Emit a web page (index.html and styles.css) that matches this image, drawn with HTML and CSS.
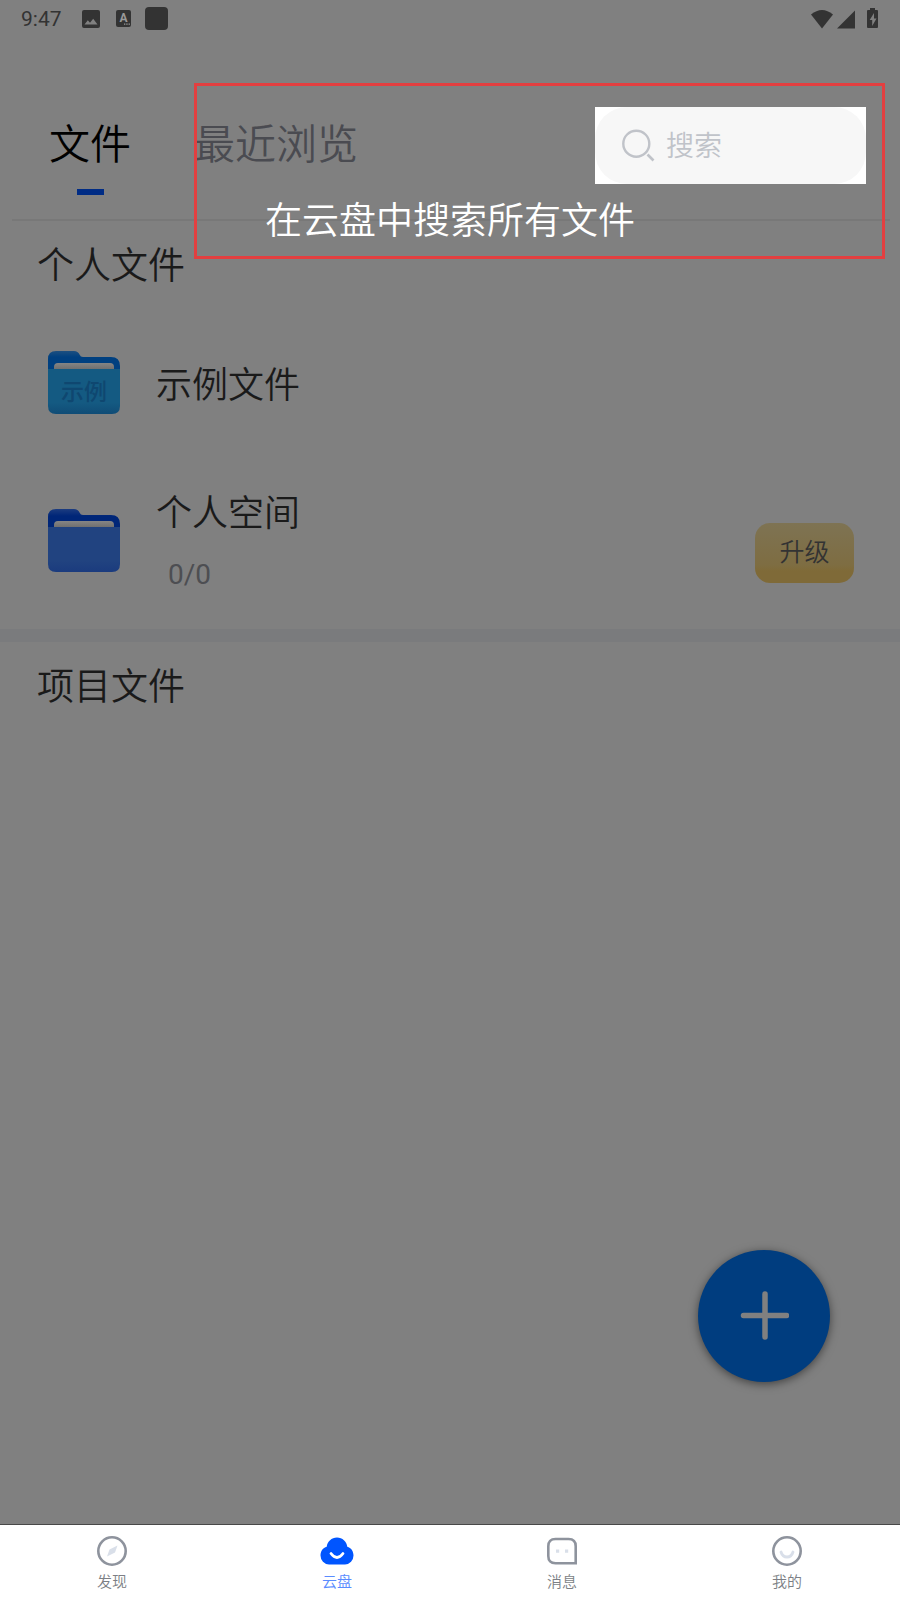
FILE: index.html
```html
<!DOCTYPE html>
<html lang="zh-CN">
<head>
<meta charset="utf-8">
<meta name="viewport" content="width=device-width, initial-scale=1">
<title>云盘</title>
<link rel="stylesheet" href="styles.css">
</head>
<body>
<div class="app">
  <div class="status">
    <span class="status-time">9:47</span>
    <svg class="status-image" width="18" height="18" viewBox="0 0 18 18" aria-hidden="true"><path fill="#333" fill-rule="evenodd" d="M2 0h14a2 2 0 0 1 2 2v14a2 2 0 0 1-2 2H2a2 2 0 0 1-2-2V2a2 2 0 0 1 2-2zM2.500 14.500h13L11.200 8.700 8 12.800 5.800 10.200z"/></svg>
    <svg class="status-letter" width="15" height="17" viewBox="0 0 15 17" aria-hidden="true"><rect width="15" height="17" rx="2" fill="#333"/><text class="status-glyph" x="7.500" y="12" text-anchor="middle">A</text><path fill="#999" d="M8 13.500h1.300v1.300H8zM10.300 13.500h1.300v1.300h-1.300zM12.600 13.500h1.300v1.300h-1.300z"/></svg>
    <span class="status-square"></span>
    <svg class="status-signals" width="68" height="22" viewBox="0 0 68 22" aria-hidden="true">
      <path fill="#333" d="M0 6.500Q11-2.500 22 6.500L11 20.500z"/>
      <path fill="#333" d="M44 2.500V20.500H26z"/>
      <path fill="#333" fill-rule="evenodd" d="M59 0h5v2h2q1 0 1 1v16q0 1-1 1h-9q-1 0-1-1V3q0-1 1-1h2zM63 5l-4.300 7h2.500v6l4.300-7.500h-2.500z"/>
    </svg>
  </div>
  <header class="header">
    <nav class="tabs">
      <button class="tab tab-active" type="button">文件</button>
      <button class="tab" type="button">最近浏览</button>
    </nav>
    <div class="spotlight">
      <label class="search">
        <svg width="34" height="34" viewBox="0 0 34 34" aria-label="搜索"><circle cx="15.300" cy="14.700" r="13" fill="none" stroke="#c0c3c9" stroke-width="2.400"/><path d="M26.500 25.500l6 6" stroke="#c0c3c9" stroke-width="2.600"/></svg>
        <input class="search-input" type="search" placeholder="搜索">
      </label>
    </div>
  </header>
  <div class="frame"></div>
  <p class="tip">在云盘中搜索所有文件</p>
  <main class="main">
    <section class="section">
      <h2 class="section-title">个人文件</h2>
      <div class="rows">
        <div class="row">
          <svg class="folder" width="72" height="63" viewBox="0 0 72 63" aria-hidden="true">
            <defs>
              <linearGradient id="tabA" x2="0" y2="1"><stop stop-color="#1d4f80"/><stop offset=".3" stop-color="#004080"/></linearGradient>
              <linearGradient id="bodyA" x2="0" y2="1"><stop offset=".75" stop-color="#145a82"/><stop offset="1" stop-color="#104c76"/></linearGradient>
              <linearGradient id="sheet" x2="0" y2="1"><stop stop-color="#858585"/><stop offset="1" stop-color="#707070"/></linearGradient>
            </defs>
            <path fill="url(#tabA)" d="M0 20V8q0-8 8-8h18q4 0 5.500 3.500Q32.500 6 35 6h28q9 0 9 9v5z"/>
            <path fill="url(#sheet)" d="M6 18v-2q0-4 4-4h52q4 0 4 4v2z"/>
            <path fill="url(#bodyA)" d="M0 18h72v37q0 8-8 8H8q-8 0-8-8z"/>
            <text class="folder-text" x="36" y="49" text-anchor="middle">示例</text>
          </svg>
          <div class="row-text"><span class="row-title">示例文件</span></div>
        </div>
        <div class="row">
          <svg class="folder" width="72" height="63" viewBox="0 0 72 63" aria-hidden="true">
            <defs>
              <linearGradient id="tabB" x2="0" y2="1"><stop stop-color="#1c3c80"/><stop offset=".35" stop-color="#002678"/></linearGradient>
              <linearGradient id="bodyB" x2="0" y2="1"><stop offset=".75" stop-color="#214380"/><stop offset="1" stop-color="#1b3b7e"/></linearGradient>
            </defs>
            <path fill="url(#tabB)" d="M0 20V8q0-8 8-8h18q4 0 5.500 3.500Q32.500 6 35 6h28q9 0 9 9v5z"/>
            <path fill="url(#sheet)" d="M6 18v-2q0-4 4-4h52q4 0 4 4v2z"/>
            <path fill="url(#bodyB)" d="M0 18h72v37q0 8-8 8H8q-8 0-8-8z"/>
          </svg>
          <div class="row-text"><span class="row-title">个人空间</span><span class="row-meta">0/0</span></div>
          <button class="upgrade" type="button">升级</button>
        </div>
      </div>
    </section>
    <section class="section section-project">
      <h2 class="section-title">项目文件</h2>
    </section>
  </main>
  <button class="fab" type="button" aria-label="新建"><svg width="50" height="50" viewBox="0 0 50 50"><path d="M26 3v43M4.500 24.500h43" stroke="#808080" stroke-width="5.500" stroke-linecap="round"/></svg></button>
  <nav class="bottom">
    <a class="item" href="#">
      <svg width="34" height="34" viewBox="0 0 34 34"><circle cx="17" cy="17" r="13.700" fill="none" stroke="#8e939d" stroke-width="2.600"/><path fill="#d9dfe9" d="M22.500 11.500l-2.500 7L12 22.500l2.500-7z"/></svg>
      <span>发现</span>
    </a>
    <a class="item item-active" href="#">
      <svg width="34" height="34" viewBox="0 0 34 34"><path fill="#0055ff" d="M9 30.500A9 9 0 0 1 .500 21.500C.500 17 3 13.800 6.700 12.700 7.500 7.500 11.500 3.500 17 3.500s9.500 4 10.300 9.200c3.700 1.100 6.200 4.300 6.200 8.800a9 9 0 0 1-8.500 9z"/><path d="M11 19.500q6 8 12 0" fill="none" stroke="#fff" stroke-width="2.800" stroke-linecap="round"/></svg>
      <span>云盘</span>
    </a>
    <a class="item" href="#">
      <svg width="34" height="34" viewBox="0 0 34 34"><path d="M10.500 5h13q7.200 0 7.200 7.200v17H10.500q-7.200 0-7.200-7.200v-9.800Q3.300 5 10.500 5z" fill="none" stroke="#8e939d" stroke-width="2.600"/><path fill="#d9dfe9" d="M11 15.500h3.200v3.200H11zM20 15.500h3.200v3.200H20z"/></svg>
      <span>消息</span>
    </a>
    <a class="item" href="#">
      <svg width="34" height="34" viewBox="0 0 34 34"><circle cx="17" cy="17" r="13.700" fill="none" stroke="#8e939d" stroke-width="2.600"/><path d="M11 18q1.500 5 6 5t6-5" fill="none" stroke="#d9dfe9" stroke-width="2.800" stroke-linecap="round"/></svg>
      <span>我的</span>
    </a>
  </nav>
</div>
</body>
</html>
```
FILE: styles.css
```css
* { box-sizing: border-box; }
body { margin: 0; background: #808080; font-family: "Noto Sans CJK SC", sans-serif; font-weight: 350; color: #1a1a1a; }
button, input { font: inherit; border: 0; padding: 0; background: none; }
svg { display: block; flex: none; }
.app { position: relative; display: flex; flex-direction: column; min-height: 100vh; }

.status { display: flex; align-items: center; height: 37px; padding: 0 21px; }
.status-time { font: 400 21px/36px Roboto, sans-serif; color: #333; }
.status-image { margin-left: 20px; }
.status-letter { margin-left: 16px; }
.status-glyph { fill: #999; font: 700 12px Roboto, sans-serif; }
.status-square { width: 23px; height: 23px; margin-left: 14px; border-radius: 4px; background: #333; }
.status-signals { margin-left: auto; }

.header { display: flex; justify-content: space-between; align-items: flex-start; padding: 70px 34px 24px 49px; }
.header::after { content: ""; position: absolute; top: 219px; left: 12px; right: 10px; height: 2px; background: #787878; }
.tabs { display: flex; gap: 63px; padding-top: 6px; }
.tab { display: flex; flex-direction: column; align-items: center; gap: 20px; height: 82px; font-size: 41px; line-height: 56px; color: #4a4b51; white-space: nowrap; }
.tab-active { color: #000; }
.tab-active::after { content: ""; width: 27px; height: 6px; background: #002c85; }
.spotlight { background: #fff; }
.search { display: flex; align-items: center; gap: 11px; width: 271px; height: 77px; padding: 0 26px; border-radius: 32px; background: #f7f7f7; }
.search-input { flex: 1; min-width: 0; padding-bottom: 4px; outline: 0; font-size: 28px; line-height: 40px; color: #333; appearance: none; }
.search-input::placeholder { color: #c0c3c9; opacity: 1; }
.frame { position: absolute; top: 83px; left: 194px; right: 15px; height: 176px; border: 3px solid #e33f40; pointer-events: none; }
.tip { position: absolute; top: 190px; left: 0; right: 0; margin: 0; text-align: center; color: #fff; font-size: 37px; line-height: 56px; pointer-events: none; }

.main { flex: 1; }
.section { padding: 16px 0 33px; }
.section-title { margin: 0; padding: 0 37px; font-size: 37px; line-height: 56px; font-weight: 350; }
.section-project { padding-top: 14px; border-top: 13px solid #7a7b7d; }
.rows { display: flex; flex-direction: column; gap: 70px; padding: 60px 46px 0 48px; }
.row { display: flex; align-items: center; gap: 36px; }
.row-text { display: flex; flex: 1; flex-direction: column; gap: 16px; }
.row-title { padding-bottom: 2px; font-size: 36px; line-height: 52px; }
.row-meta { padding-left: 12px; font: 28px/42px Roboto, sans-serif; color: #4d4e52; }
.folder-text { font-size: 23px; font-weight: 500; fill: #0f4770; }
.upgrade { align-self: flex-end; width: 99px; height: 60px; margin-bottom: 13px; padding-bottom: 6px; border-radius: 15px; background: linear-gradient(#7e7353, #7e6d42 70%, #7f6a38 80%, #7f6a38); color: #333; font-size: 25px; line-height: 36px; }

.fab { position: absolute; right: 70px; bottom: 218px; display: flex; align-items: center; justify-content: center; width: 132px; height: 132px; border-radius: 50%; background: #003d7f; box-shadow: 0 2px 10px rgba(0, 0, 0, .5); }

.bottom { display: grid; grid-template-columns: repeat(4, 1fr); background: #fff; border-top: 1px solid #484848; }
.item { display: flex; flex-direction: column; align-items: center; gap: 3px; padding: 9px 1px 9px 0; color: #7c7f85; font-size: 15px; line-height: 20px; text-decoration: none; }
.item-active { color: #5a8cff; }
```
